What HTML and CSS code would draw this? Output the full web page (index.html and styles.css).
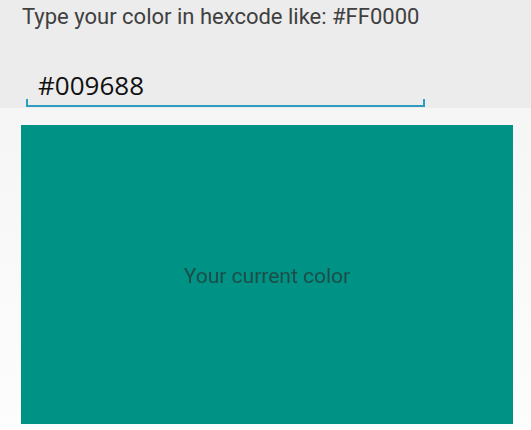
FILE: index.html
```html
<!doctype html>
<html lang="en">

<head>
    <meta charset="utf-8">
    <meta name="viewport" content="width=device-width, initial-scale=1.0">
    <title>Color Preview</title>
    <link rel="stylesheet" href="styles.css">
</head>

<body>
    <div class="header">
        <p class="hint">Type your color in hexcode like: #FF0000</p>
        <div class="field">
            <input type="text" id="hexInput" class="hex-input" value="#009688">
        </div>
    </div>

    <div class="preview-area">
        <div class="swatch" id="swatch" style="background: #009688;">
            <span class="swatch-label">Your current color</span>
        </div>
    </div>
</body>

</html>
```

FILE: styles.css
```css
html, body {
    margin: 0;
    padding: 0;
    height: 100%;
    overflow: hidden;
}

body {
    font-family: 'Roboto', 'Arial', sans-serif;
    background: linear-gradient(180deg, #f3f3f3, #fdfdfd);
}

.header {
    background: #ececec;
    height: 108px;
    padding: 0 0 0 22px;
    box-sizing: border-box;
}

.hint {
    margin: 0;
    padding-top: 4px;
    font-size: 22px;
    line-height: 26px;
    color: #404040;
}

.field {
    margin: 41px 0 0 4px;
    width: 399px;
    height: 34px;
    position: relative;
    border-bottom: 2px solid #2d9cbd;
}

/* little end ticks of the underline */
.field::before,
.field::after {
    content: '';
    position: absolute;
    bottom: 0;
    width: 2px;
    height: 6px;
    background: #2d9cbd;
}

.field::before { left: 0; }
.field::after { right: 0; }

.hex-input {
    border: none;
    outline: none;
    background: transparent;
    font-family: 'Open Sans', 'Noto Sans', sans-serif;
    font-size: 26px;
    color: #111111;
    padding: 0 0 6px 12px;
    margin: 0;
    width: 100%;
    height: 34px;
    box-sizing: border-box;
}

.preview-area {
    padding: 17px 18px 0 21px;
}

.swatch {
    height: 299px;
    display: flex;
    align-items: center;
    justify-content: center;
    filter: brightness(0.97);
}

.swatch-label {
    font-size: 21px;
    color: #1d4f4a;
    margin-top: 2px;
}
```
